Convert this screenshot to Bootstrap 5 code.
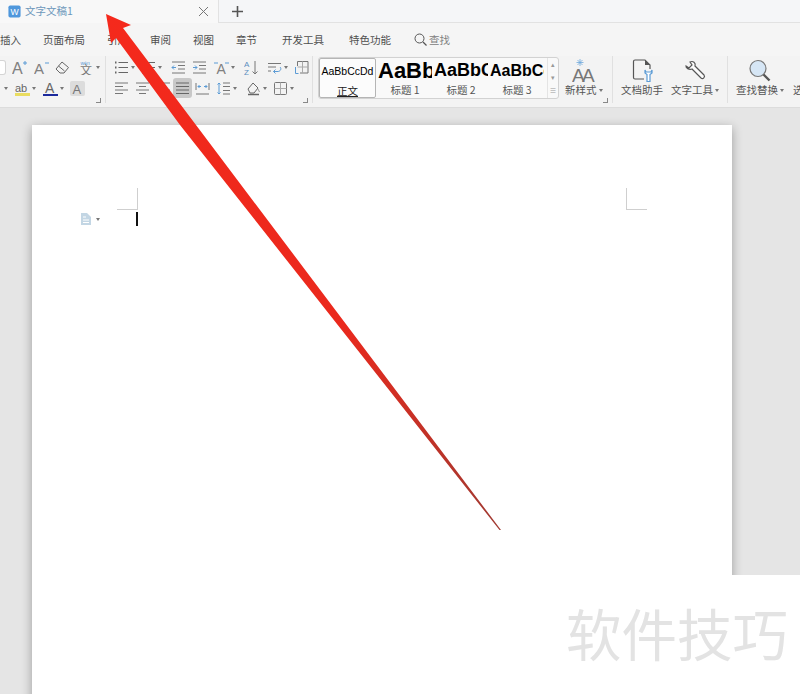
<!DOCTYPE html>
<html lang="zh-CN">

<head>
    <meta charset="UTF-8">
    <meta name="viewport" content="width=device-width, initial-scale=1.0">
    <title>文字文稿1</title>
    <link href="https://cdn.jsdelivr.net/npm/bootstrap@5.3.0/dist/css/bootstrap.min.css" rel="stylesheet">
    <style>
        html, body { height: 694px; overflow: hidden; }
        body { font-family: "Noto Sans CJK SC", "Liberation Sans", sans-serif; font-size: 10.5px; color: #555; background: #e5e5e5; }

        /* title bar */
        .tabbar { height: 23px; background: #f5f6f8; border-bottom: 1px solid #e2e2e2; }
        .doc-tab { width: 219px; height: 23px; padding: 0 9px 0 8px; background: #f8f8f8; border-right: 1px solid #e2e2e2; }
        .tab-logo { width: 13px; height: 13px; flex: none; }
        .doc-name { color: #6c97bb; margin-left: 4px; }
        .new-tab { margin-left: 13px; }

        /* menu row */
        .menubar { height: 33px; background: #f5f5f5; gap: 22px; }
        .menubar span { color: #4e4e4e; white-space: nowrap; }
        .menu-dev { margin-left: 3px; }
        .menu-find { margin-left: 1px; gap: 2px; color: #808080 !important; }

        /* ribbon */
        .ribbon { height: 52px; background: #f3f3f3; border-bottom: 1px solid #dcdcdc; }
        .rgroup { position: relative; height: 47px; border-right: 1px solid #e0e0e0; flex: none; }
        .g1 { width: 106px; }
        .g2 { width: 207px; padding-left: 8px; }
        .g3 { width: 300px; padding-left: 5px; }
        .g4 { width: 115px; padding-left: 8px; gap: 8px; }
        .g5 { width: 73px; padding-left: 8px; gap: 9px; border-right: 0; overflow: hidden; }
        .irow { height: 16px; margin-top: 3px; }
        .irow + .irow { margin-top: 5px; }
        .slot { flex: none; height: 16px; display: flex; align-items: center; }
        .s12 { width: 12px; } .s15 { width: 15px; } .s19 { width: 19px; } .s20 { width: 20px; }
        .s21 { width: 21px; } .s22 { width: 22px; } .s23 { width: 23px; } .s24 { width: 24px; }
        .s27 { width: 27px; } .s28 { width: 28px; } .s30 { width: 30px; }
        .ico { width: 15px; height: 15px; flex: none; }
        .caret-dn { width: 0; height: 0; margin-left: 2px; flex: none; border: 2.5px solid transparent; border-top: 3px solid #777; border-bottom: 0; }
        .combo-edge { width: 6px; height: 15px; background: #fff; border: 1px solid #d4d4d4; border-left: 0; border-radius: 0 3px 3px 0; }
        .pressed { width: 19px; height: 20px; margin-left: -2px; background: #c8c8c8; border-radius: 3px; display: flex; align-items: center; justify-content: center; }
        .shaded { background: #dcdcdc; border-radius: 2px; }
        .launch { position: absolute; right: 4px; bottom: 0; width: 5px; height: 5px; border-right: 1px solid #888; border-bottom: 1px solid #888; }

        /* style gallery */
        .gallery { width: 241px; height: 42px; margin-top: 1px; gap: 2px; background: #f9f9f9; border: 1px solid #d2d2d2; border-radius: 3px; }
        .gcell { width: 54px; flex: none; overflow: hidden; text-align: center; color: #000; }
        .gcell-on { width: 57px; height: 40px; background: #fcfcfc; border: 1px solid #b5b5b5; border-radius: 2px; }
        .gsample { height: 25px; line-height: 25px; font-family: "Liberation Sans", sans-serif; white-space: nowrap; overflow: hidden; }
        .gs0 { font-size: 10.5px; }
        .gs1 { font-size: 22px; font-weight: 700; text-align: left; }
        .gs2 { font-size: 18px; font-weight: 700; text-align: left; }
        .gs3 { font-size: 16px; font-weight: 700; text-align: left; }
        .glabel { line-height: 14px; color: #555; }
        .gcell-on .glabel { color: #222; }
        .gscroll { width: 11px; flex: none; margin-left: auto; border-left: 1px solid #e4e4e4; color: #999; font-size: 7px; line-height: 13px; text-align: center; }

        .bigtool { height: 47px; flex: none; }
        .bigico { width: 24px; height: 24px; margin-top: 3px; }
        .bigtool .lbl { line-height: 14px; white-space: nowrap; display: flex; align-items: center; }
        .newstyle { margin-left: 6px; }

        /* document area */
        .canvas { position: relative; height: 586px; background: #e5e5e5; padding: 17px 0 0 32px; overflow: hidden; }
        .sheet { width: 700px; height: 600px; background: #fff; box-shadow: 0 3px 10px rgba(0, 0, 0, .32); padding-top: 63px; }
        .crop-row { padding: 0 85px; }
        .crop-mark { width: 21px; height: 22px; border-bottom: 1px solid #cfcfcf; }
        .crop-l { border-right: 1px solid #cfcfcf; }
        .crop-r { border-left: 1px solid #cfcfcf; }
        .cursor-row { padding-left: 48px; margin-top: 2px; height: 14px; }
        .caret-bar { width: 2px; height: 14px; background: #111; margin-left: 36px; }

        .stamp { position: absolute; right: 0; bottom: 0; width: 270px; height: 119px; background: #fff; color: #e3e3e3; font-size: 55.5px; line-height: 1; padding: 30px 0 0 36px; white-space: nowrap; }
        .arrow { position: absolute; left: 0; top: 0; width: 800px; height: 694px; pointer-events: none; }
    </style>
</head>

<body>
    <svg width="0" height="0" class="position-absolute">
        <defs>
            <g id="i-list" stroke="#666" fill="none"><path d="M4.500 2.500H14M4.500 7.500H14M4.500 12.500H14"/><path d="M1 2.500h1.500M1 7.500h1.500M1 12.500h1.500" stroke-width="2"/></g>
            <g id="i-outdent" stroke="#777" fill="none"><path d="M1 2H14M7 5.500H14M7 9H14M1 13H14"/><path d="M5 7.500H1M3 5.500l-2 2 2 2" stroke="#5b9bd5"/></g>
            <g id="i-indent" stroke="#777" fill="none"><path d="M1 2H14M7 5.500H14M7 9H14M1 13H14"/><path d="M1 7.500H5M3 5.500l2 2-2 2" stroke="#5b9bd5"/></g>
            <g id="i-left" stroke="#777" fill="none"><path d="M1 2H14M1 5.500H9M1 9H14M1 12.500H9"/></g>
            <g id="i-center" stroke="#777" fill="none"><path d="M1 2H14M4 5.500H11M1 9H14M4 12.500H11"/></g>
            <g id="i-just" stroke="#666" fill="none"><path d="M1 2H14M1 5.500H14M1 9H14M1 12.500H14" stroke-width="1.200"/></g>
            <g id="i-dist" stroke="#777" fill="none"><path d="M1 13H14M1 2v7M14 2v7"/><path d="M3 5.500h3M12 5.500H9M4.500 4l-1.500 1.500L4.500 7M10.500 4l1.500 1.500L10.500 7" stroke="#5b9bd5"/></g>
            <g id="i-spacing" stroke="#777" fill="none"><path d="M7 2H14M7 5.500H14M7 9.500H14M7 13H14"/><path d="M3 2v11M1.500 3.500L3 2l1.500 1.500M1.500 11.500L3 13l1.500-1.500" stroke="#5b9bd5"/></g>
            <g id="i-eraser" stroke="#666" fill="none"><path d="M1 9l6-7 6.500 5.500L9 13H5z"/><path d="M3.500 6l6 5"/></g>
            <g id="i-fill" stroke="#666" fill="none"><path d="M2 8l5-6 5 5-4 5H4z"/><path d="M2 13.500H13" stroke-width="1.500"/><path d="M12 8l1.500 3" stroke="#999"/></g>
            <g id="i-border" stroke="#777" fill="none"><rect x="1.500" y="1.500" width="12" height="12" rx="1"/><path d="M7.500 1.500v12M1.500 7.500h12" stroke="#aaa"/></g>
            <g id="i-table" stroke="#777" fill="none"><path d="M3.500 6V1.500H14V13H6"/><path d="M8.500 1.500V13M3.500 7H14" stroke="#aaa"/><path d="M1.500 7v6.500h3" stroke="#5b9bd5"/></g>
            <g id="i-swap" stroke="#777" fill="none"><path d="M1 3.500H14M1 7H9M1 11h3"/><path d="M13 7c2 2 0 4.500-2 4.500H6.500M8.500 9.500l-2 2 2 2" stroke="#5b9bd5"/></g>
        </defs>
    </svg>

    <div class="tabbar d-flex align-items-center">
        <div class="doc-tab d-flex align-items-center">
            <svg class="tab-logo" viewBox="0 0 15 15">
                <rect x="0.500" y="0.500" width="14" height="14" rx="2" fill="#4f97dc"/>
                <text x="7.500" y="11.500" text-anchor="middle" font-size="10" font-family="Liberation Sans" fill="#fff">W</text>
            </svg>
            <span class="doc-name flex-grow-1">文字文稿1</span>
            <svg width="11" height="11" viewBox="0 0 11 11"><path d="M1 1l9 9M10 1l-9 9" stroke="#777" fill="none"/></svg>
        </div>
        <svg class="new-tab" width="11" height="11" viewBox="0 0 11 11"><path d="M5.500 0v11M0 5.500h11" stroke="#555" stroke-width="1.600" fill="none"/></svg>
    </div>

    <div class="menubar d-flex align-items-center">
        <span>插入</span>
        <span>页面布局</span>
        <span>引用</span>
        <span>审阅</span>
        <span>视图</span>
        <span>章节</span>
        <span class="menu-dev">开发工具</span>
        <span class="menu-dev">特色功能</span>
        <span class="menu-find d-flex align-items-center">
            <svg width="13" height="13" viewBox="0 0 13 13"><circle cx="5.500" cy="5.500" r="4.500" stroke="#555" fill="none"/><path d="M9 9l3.500 3.500" stroke="#555" stroke-width="1.200"/></svg>查找</span>
    </div>

    <div class="ribbon d-flex">
        <div class="rgroup g1">
            <div class="irow d-flex">
                <div class="slot s12"><div class="combo-edge"></div></div>
                <div class="slot s22"><svg class="ico" viewBox="0 0 15 15"><text x="0" y="14" font-size="16" font-family="Liberation Sans" fill="#808080">A</text><path d="M11 3h4M13 1v4" stroke="#5b9bd5"/></svg></div>
                <div class="slot s21"><svg class="ico" viewBox="0 0 15 15"><text x="0" y="14" font-size="15" font-family="Liberation Sans" fill="#808080">A</text><path d="M11 3h4" stroke="#5b9bd5"/></svg></div>
                <div class="slot s24"><svg class="ico" viewBox="0 0 15 15"><use href="#i-eraser"/></svg></div>
                <div class="slot"><svg class="ico" viewBox="0 0 15 15"><text x="1.500" y="4.500" font-size="5" font-family="Liberation Sans" fill="#5b9bd5">wén</text><text x="1" y="15" font-size="12" font-family="Noto Sans CJK SC" fill="#777">文</text></svg><i class="caret-dn"></i></div>
            </div>
            <div class="irow d-flex">
                <div class="slot s15"><i class="caret-dn ms-1"></i></div>
                <div class="slot s28"><svg class="ico" viewBox="0 0 15 15"><text x="0" y="11" font-size="11" font-family="Liberation Sans" fill="#666">ab</text><rect x="0" y="12" width="15" height="3" fill="#e9dc60"/></svg><i class="caret-dn"></i></div>
                <div class="slot s27"><svg class="ico" viewBox="0 0 15 15"><text x="2" y="12" font-size="14" font-family="Liberation Sans" fill="#666">A</text><rect x="0" y="13" width="15" height="2" fill="#1c2a9c"/></svg><i class="caret-dn"></i></div>
                <div class="slot"><svg class="ico shaded" viewBox="0 0 15 15"><text x="2.500" y="12.500" font-size="13" font-family="Liberation Sans" fill="#777">A</text></svg></div>
            </div>
            <span class="launch"></span>
        </div>

        <div class="rgroup g2">
            <div class="irow d-flex">
                <div class="slot s27"><svg class="ico" viewBox="0 0 15 15"><use href="#i-list"/></svg><i class="caret-dn"></i></div>
                <div class="slot s30"><svg class="ico" viewBox="0 0 15 15"><use href="#i-list"/></svg><i class="caret-dn"></i></div>
                <div class="slot s21"><svg class="ico" viewBox="0 0 15 15"><use href="#i-outdent"/></svg></div>
                <div class="slot s22"><svg class="ico" viewBox="0 0 15 15"><use href="#i-indent"/></svg></div>
                <div class="slot s30"><svg class="ico" viewBox="0 0 15 15"><text x="2.500" y="14" font-size="14" font-family="Liberation Sans" fill="#808080">A</text><path d="M0 3h4M11 3h4" stroke="#5b9bd5"/></svg><i class="caret-dn"></i></div>
                <div class="slot s23"><svg class="ico" viewBox="0 0 15 15"><text x="0" y="7" font-size="8" font-family="Liberation Sans" fill="#5b8fc0">A</text><text x="0" y="15" font-size="8" font-family="Liberation Sans" fill="#5b8fc0">Z</text><path d="M11 1v13M8.500 11.500L11 14l2.500-2.500" stroke="#777" fill="none"/></svg></div>
                <div class="slot s27"><svg class="ico" viewBox="0 0 15 15"><use href="#i-swap"/></svg><i class="caret-dn"></i></div>
                <div class="slot"><svg class="ico" viewBox="0 0 15 15"><use href="#i-table"/></svg></div>
            </div>
            <div class="irow d-flex">
                <div class="slot s21"><svg class="ico" viewBox="0 0 15 15"><use href="#i-left"/></svg></div>
                <div class="slot s21"><svg class="ico" viewBox="0 0 15 15"><use href="#i-center"/></svg></div>
                <div class="slot s19"><svg class="ico" viewBox="0 0 15 15"><use href="#i-left"/></svg></div>
                <div class="slot s20"><div class="pressed"><svg class="ico" viewBox="0 0 15 15"><use href="#i-just"/></svg></div></div>
                <div class="slot s21"><svg class="ico" viewBox="0 0 15 15"><use href="#i-dist"/></svg></div>
                <div class="slot s30"><svg class="ico" viewBox="0 0 15 15"><use href="#i-spacing"/></svg><i class="caret-dn"></i></div>
                <div class="slot s27"><svg class="ico" viewBox="0 0 15 15"><use href="#i-fill"/></svg><i class="caret-dn"></i></div>
                <div class="slot"><svg class="ico" viewBox="0 0 15 15"><use href="#i-border"/></svg><i class="caret-dn"></i></div>
            </div>
            <span class="launch"></span>
        </div>

        <div class="rgroup g3 d-flex">
            <div class="gallery d-flex">
                <div class="gcell gcell-on"><div class="gsample gs0">AaBbCcDd</div><div class="glabel"><span class="text-decoration-underline">正文</span></div></div>
                <div class="gcell"><div class="gsample gs1">AaBbCcDd</div><div class="glabel">标题 1</div></div>
                <div class="gcell"><div class="gsample gs2">AaBbCcDd</div><div class="glabel">标题 2</div></div>
                <div class="gcell"><div class="gsample gs3">AaBbCcDd</div><div class="glabel">标题 3</div></div>
                <div class="gscroll">▴<br>▾<br>≡</div>
            </div>
            <div class="bigtool newstyle d-flex flex-column align-items-center">
                <svg class="bigico" viewBox="0 0 24 24">
                    <text x="0" y="23" font-size="19" font-family="Liberation Sans" fill="#777">A</text>
                    <text x="10" y="23" font-size="19" font-family="Liberation Sans" fill="#777">A</text>
                    <path d="M8 0v7M4.500 3.500h7M5.500 1l5 5M10.500 1l-5 5" stroke="#6fa8dc" stroke-width=".8"/>
                </svg>
                <span class="lbl">新样式<i class="caret-dn"></i></span>
            </div>
            <span class="launch"></span>
        </div>

        <div class="rgroup g4 d-flex">
            <div class="bigtool d-flex flex-column align-items-center">
                <svg class="bigico" viewBox="0 0 24 24">
                    <path d="M14 20H5a1.500 1.500 0 0 1-1.500-1.500v-16A1.500 1.500 0 0 1 5 1h10l5 5v4" stroke="#555" fill="none" stroke-width="1.200"/>
                    <path d="M15 1v5h5" fill="#555"/>
                    <path d="M15 11v3l2 1.500v7h3v-7l2-1.500v-3l-1 2h-5z" stroke="#5b9bd5" fill="#fff" stroke-width="1.200"/>
                </svg>
                <span class="lbl">文档助手</span>
            </div>
            <div class="bigtool d-flex flex-column align-items-center">
                <svg class="bigico" viewBox="0 0 24 24">
                    <path d="M3 7l3 2 3-3-2-3c3-1.500 6 1 5 4l9 9c1.500 2-1 4.500-3 3l-9-9c-3 1-6.500-1-6-3z" stroke="#555" fill="#fbfbfb" stroke-width="1.200"/>
                </svg>
                <span class="lbl">文字工具<i class="caret-dn"></i></span>
            </div>
        </div>

        <div class="rgroup g5 d-flex">
            <div class="bigtool d-flex flex-column align-items-center">
                <svg class="bigico" viewBox="0 0 24 24">
                    <circle cx="10" cy="9.500" r="8" stroke="#777" fill="#d6e6f5" stroke-width="1.200"/>
                    <path d="M15.500 15.500l6 6" stroke="#555" stroke-width="2.400"/>
                </svg>
                <span class="lbl">查找替换<i class="caret-dn"></i></span>
            </div>
            <div class="bigtool d-flex flex-column">
                <svg class="bigico" viewBox="0 0 24 24"></svg>
                <span class="lbl">选择</span>
            </div>
        </div>
    </div>

    <div class="canvas">
        <div class="sheet">
            <div class="crop-row d-flex justify-content-between">
                <div class="crop-mark crop-l"></div>
                <div class="crop-mark crop-r"></div>
            </div>
            <div class="cursor-row d-flex align-items-center">
                <svg width="12" height="12" viewBox="0 0 12 12">
                    <path d="M1 0h6l4 4v8H1z" fill="#c3d6e4"/>
                    <path d="M3 4h3M3 7h6M3 9.500h6" stroke="#fff"/>
                </svg>
                <i class="caret-dn ms-1"></i>
                <div class="caret-bar"></div>
            </div>
        </div>
        <div class="stamp">软件技巧</div>
    </div>

    <svg class="arrow" viewBox="0 0 800 694">
        <defs>
            <linearGradient id="arrowfill" gradientUnits="userSpaceOnUse" x1="106" y1="14" x2="500" y2="530">
                <stop offset="0" stop-color="#f5291c"/>
                <stop offset=".6" stop-color="#ea291d"/>
                <stop offset=".85" stop-color="#bb3329"/>
                <stop offset="1" stop-color="#a03a32"/>
            </linearGradient>
        </defs>
        <polygon points="106,14 131,25 123,28 501,530 499.500,530 180,125 116,38 111,43" fill="url(#arrowfill)"/>
    </svg>

    <script src="https://cdn.jsdelivr.net/npm/bootstrap@5.3.0/dist/js/bootstrap.bundle.min.js"></script>
</body>

</html>
